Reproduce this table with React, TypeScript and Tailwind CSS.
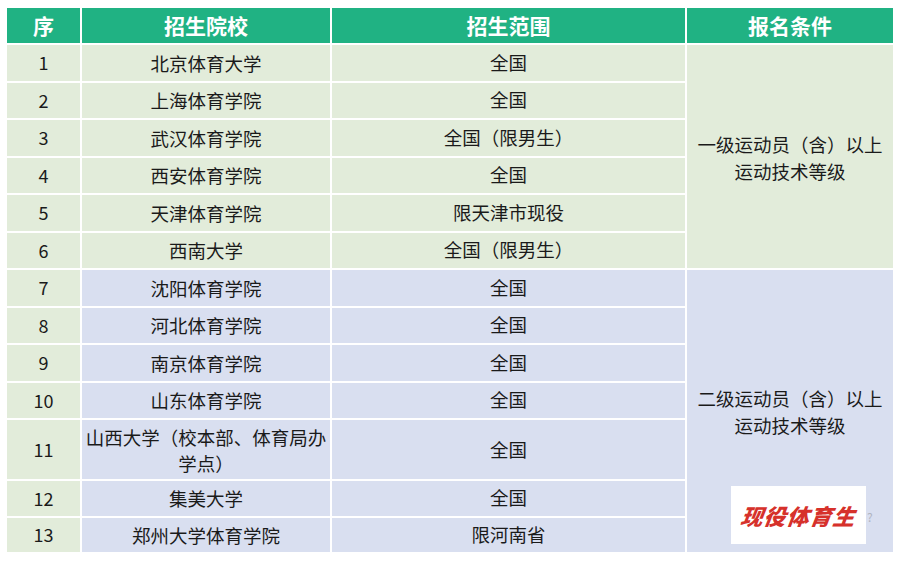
const schools = [
  { no: "1", name: "北京体育大学", scope: "全国" },
  { no: "2", name: "上海体育学院", scope: "全国" },
  { no: "3", name: "武汉体育学院", scope: "全国（限男生）" },
  { no: "4", name: "西安体育学院", scope: "全国" },
  { no: "5", name: "天津体育学院", scope: "限天津市现役" },
  { no: "6", name: "西南大学", scope: "全国（限男生）" },
  { no: "7", name: "沈阳体育学院", scope: "全国" },
  { no: "8", name: "河北体育学院", scope: "全国" },
  { no: "9", name: "南京体育学院", scope: "全国" },
  { no: "10", name: "山东体育学院", scope: "全国" },
  { no: "11", name: "山西大学（校本部、体育局办", name2: "学点）", scope: "全国" },
  { no: "12", name: "集美大学", scope: "全国" },
  { no: "13", name: "郑州大学体育学院", scope: "限河南省" },
];

const font = { fontFamily: '"Microsoft YaHei", "Noto Sans CJK SC", "Noto Sans", sans-serif' };

export default function App() {
  return (
    <div className="relative w-[900px] h-[561px] bg-white pl-[7px] pt-[8px] text-[#1a1a1a]" style={font}>
      <div className="grid grid-cols-[73px_248px_353px_206px] grid-rows-[35px_repeat(10,35.5px)_59px_34.5px_34.5px] gap-[2px]">
        {["序", "招生院校", "招生范围", "报名条件"].map((h) => (
          <div key={h} className="bg-[#20b283] text-white font-bold text-[21px] flex items-center justify-center">
            {h}
          </div>
        ))}

        {schools.map((s, i) => {
          const lavender = i >= 6;
          const bg = lavender ? "bg-[#d9dff0]" : "bg-[#e2ecda]";
          return (
            <div key={s.no} className="contents">
              <div className="bg-[#e2ecda] flex items-center justify-center text-[18px]" style={{ gridRow: i + 2, gridColumn: 1 }}>
                {s.no}
              </div>
              <div className={`${bg} flex flex-col items-center justify-center text-[18.5px] leading-[26px]`} style={{ gridRow: i + 2, gridColumn: 2 }}>
                <span>{s.name}</span>
                {s.name2 && <span>{s.name2}</span>}
              </div>
              <div className={`${bg} flex items-center justify-center text-[18.5px]`} style={{ gridRow: i + 2, gridColumn: 3 }}>
                {s.scope}
              </div>
            </div>
          );
        })}

        <div className="row-start-2 row-end-8 col-start-4 bg-[#e2ecda] flex flex-col items-center justify-center text-[18.5px] leading-[27px] pt-[2px]">
          <span>一级运动员（含）以上</span>
          <span>运动技术等级</span>
        </div>
        <div className="row-start-8 row-end-15 col-start-4 bg-[#d9dff0] flex flex-col items-center justify-center text-[18.5px] leading-[27px] pt-[2px]">
          <span>二级运动员（含）以上</span>
          <span>运动技术等级</span>
        </div>
      </div>

      <div className="absolute left-[731px] top-[486px] w-[135px] h-[58px] bg-white flex items-center justify-center">
        <span className="text-[#d6312b] font-black italic text-[22px] tracking-[1px] skew-x-[-8deg]">现役体育生</span>
      </div>
      <span className="absolute left-[867px] top-[508px] text-[12px] text-[#b0b4c0]">?</span>
    </div>
  );
}
